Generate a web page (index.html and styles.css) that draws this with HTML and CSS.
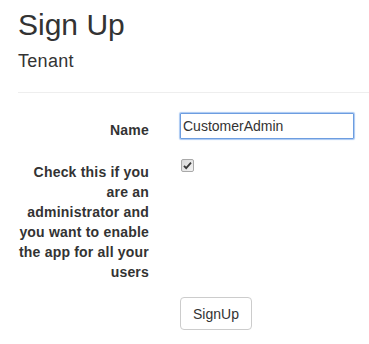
FILE: index.html
```html
<!DOCTYPE html>
<html>
<head>
<meta name="viewport" content="width=device-width, initial-scale=1">
<link rel="stylesheet" href="styles.css">
</head>
<body>

<div class="page">
  <h2 class="title">Sign Up</h2>
  <h4 class="subtitle">Tenant</h4>
  <hr class="divider">

  <form class="signup-form">
    <div class="form-row">
      <label class="control-label" for="tenantName">Name</label>
      <input type="text" id="tenantName" class="form-input focused" value="CustomerAdmin" autofocus>
    </div>

    <div class="form-row">
      <label class="control-label" for="isAdmin">Check this if you are an administrator and you want to enable the app for all your users</label>
      <span class="checkbox" id="isAdmin">
        <svg width="13" height="13" viewBox="0 0 13 13">
          <defs>
            <linearGradient id="cbg" x1="0" y1="0" x2="1" y2="1">
              <stop offset="0" stop-color="#d8d8d8"/>
              <stop offset="1" stop-color="#f4f4f4"/>
            </linearGradient>
          </defs>
          <rect x="0.5" y="0.5" width="12" height="12" rx="1.5" fill="url(#cbg)" stroke="#a9a9a9"/>
          <path d="M3 6.8 L5.2 9.2 L10 3.6" fill="none" stroke="#3a3a3a" stroke-width="1.8"/>
        </svg>
      </span>
    </div>

    <div class="form-row">
      <span></span>
      <button type="button" class="btn">SignUp</button>
    </div>
  </form>
</div>

</body>
</html>
```

FILE: styles.css
```css
body {
  margin: 0;
  font-family: "Liberation Sans", Arial, sans-serif;
  font-size: 14px;
  line-height: 20px;
  color: #333;
  background: #fff;
}

.page {
  padding-left: 18px;
}

.title {
  margin: 8px 0 11px;
  font-size: 30px;
  font-weight: normal;
  line-height: 1.1;
}

.subtitle {
  margin: 0;
  font-size: 18px;
  font-weight: normal;
  line-height: 1.1;
  letter-spacing: 0.3px;
}

.divider {
  margin: 20px 0 20px;
  border: 0;
  border-top: 1px solid #eee;
}

.signup-form {
  margin-left: -4px;
}

.form-row {
  display: grid;
  grid-template-columns: 135px 174px;
  column-gap: 31px;
  align-items: start;
  margin-bottom: 15px;
}

.control-label {
  padding-top: 7px;
  text-align: right;
  font-weight: bold;
  letter-spacing: 0.2px;
}

.form-input {
  box-sizing: border-box;
  width: 174px;
  height: 26px;
  padding: 0 2px;
  font-family: inherit;
  font-size: 14px;
  color: #333;
  border: 1px solid #a9a9a9;
  border-radius: 1px;
  outline: none;
}

.form-input.focused {
  border-color: #6d9de0;
  box-shadow: 0 0 1px 1px #a9c8f2;
}

.checkbox {
  display: block;
  width: 13px;
  height: 13px;
  margin-top: 4px;
  margin-left: 1px;
}

.checkbox svg {
  display: block;
}

.btn {
  justify-self: start;
  padding: 6px 12px 5px;
  font-family: inherit;
  font-size: 14px;
  line-height: 20px;
  color: #333;
  background: #fff;
  border: 1px solid #ccc;
  border-radius: 4px;
  cursor: pointer;
}
```
